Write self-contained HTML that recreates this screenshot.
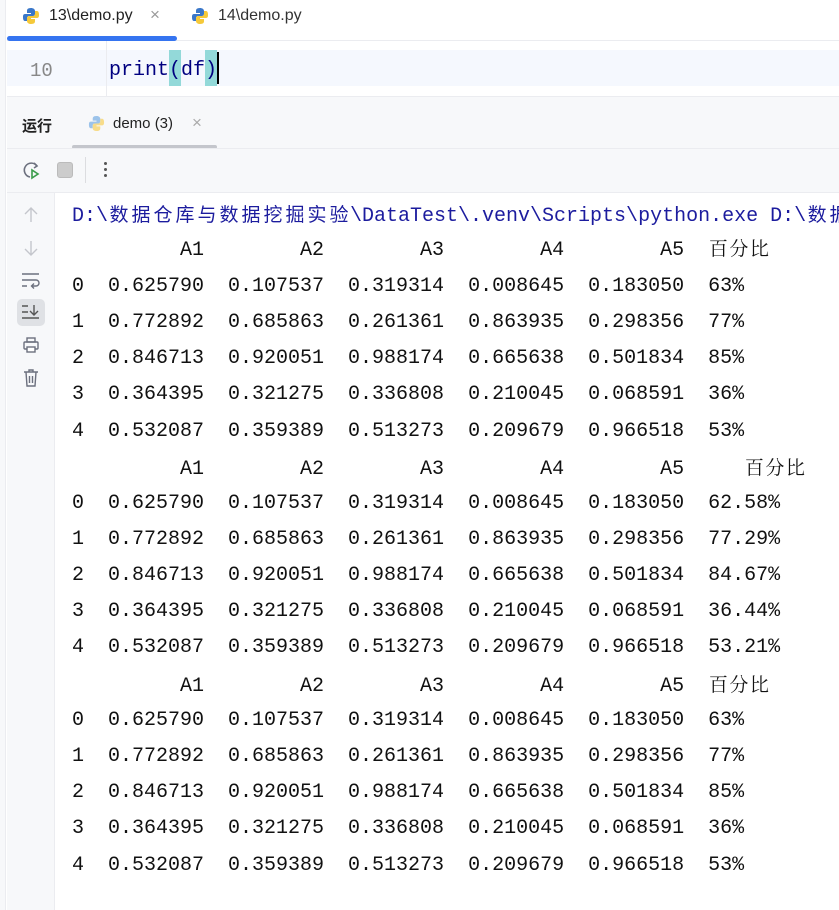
<!DOCTYPE html>
<html><head><meta charset="utf-8"><style>
*{margin:0;padding:0;box-sizing:border-box}
body{width:839px;height:910px;overflow:hidden;background:#fff;font-family:"Liberation Sans","Noto Sans CJK SC",sans-serif;position:relative}
.abs{position:absolute}
.mono{font-family:"Liberation Mono","Noto Sans CJK SC",monospace;font-size:20px;line-height:24px;white-space:pre;color:#111}
.cj{font-family:"Noto Serif CJK SC","Noto Sans CJK SC",serif;display:inline-block;width:20.5px;font-size:19px;text-align:center}
.cp{display:inline-block;width:22px;text-align:center;font-family:"Noto Sans CJK SC",sans-serif;font-size:19px}
.l{position:absolute;left:72px}
</style></head><body>
<div class="abs" style="left:0;top:0;width:6px;height:910px;background:#f7f8fa;border-right:1px solid #ebecf0"></div>
<div class="abs" style="left:7px;top:0;width:832px;height:41px;background:#fff;border-bottom:1px solid #ebecf0"></div>
<svg class="abs" style="left:22px;top:7px" width="18" height="18" viewBox="0 0 18 18"><path d="M9 1C5 1 5 3 5 4v2h4v1H3C1 7 1 9 1 10s0 4 2 4h2v-3c0-1 1-2 2-2h4c1 0 2-1 2-2V4c0-2-2-3-4-3z" fill="#3a77c9"/><path d="M9 17c4 0 4-2 4-3v-2H9v-1h6c2 0 2-2 2-3s0-4-2-4h-2v3c0 1-1 2-2 2H7c-1 0-2 1-2 2v3c0 2 2 3 4 3z" fill="#f5c93a"/></svg>
<div class="abs" style="left:49px;top:7px;font-size:16px;color:#222">13\demo.py</div>
<div class="abs" style="left:150px;top:5px;font-size:17px;color:#999">×</div>
<svg class="abs" style="left:191px;top:7px" width="18" height="18" viewBox="0 0 18 18"><path d="M9 1C5 1 5 3 5 4v2h4v1H3C1 7 1 9 1 10s0 4 2 4h2v-3c0-1 1-2 2-2h4c1 0 2-1 2-2V4c0-2-2-3-4-3z" fill="#3a77c9"/><path d="M9 17c4 0 4-2 4-3v-2H9v-1h6c2 0 2-2 2-3s0-4-2-4h-2v3c0 1-1 2-2 2H7c-1 0-2 1-2 2v3c0 2 2 3 4 3z" fill="#f5c93a"/></svg>
<div class="abs" style="left:218px;top:7px;font-size:16px;color:#333">14\demo.py</div>
<div class="abs" style="left:7px;top:36px;width:170px;height:5px;background:#3574f0;border-radius:3px"></div>
<div class="abs" style="left:7px;top:41px;width:832px;height:55px;background:#fff"></div>
<div class="abs" style="left:7px;top:50px;width:832px;height:36px;background:#f5f8fe"></div>
<div class="abs" style="left:106px;top:41px;width:1px;height:55px;background:#ebecf0"></div>
<div class="abs mono" style="left:30px;top:59px;color:#888;font-size:19px">10</div>
<div class="abs" style="left:169px;top:50px;width:12px;height:36px;background:#93d9d9"></div>
<div class="abs" style="left:205px;top:50px;width:12px;height:36px;background:#93d9d9"></div>
<div class="abs" style="left:217px;top:52px;width:2px;height:32px;background:#000"></div>
<div class="abs mono" style="left:109px;top:59px;color:#000080">print(df)</div>
<div class="abs" style="left:7px;top:96px;width:832px;height:97px;background:#f7f8fa;border-top:1px solid #ebecf0"></div>
<div class="abs" style="left:22px;top:115px;font-size:15px;font-weight:bold;color:#222">运行</div>
<svg class="abs" style="left:88px;top:115px" width="17" height="17" viewBox="0 0 18 18"><path d="M9 1C5 1 5 3 5 4v2h4v1H3C1 7 1 9 1 10s0 4 2 4h2v-3c0-1 1-2 2-2h4c1 0 2-1 2-2V4c0-2-2-3-4-3z" fill="#9cc3ea"/><path d="M9 17c4 0 4-2 4-3v-2H9v-1h6c2 0 2-2 2-3s0-4-2-4h-2v3c0 1-1 2-2 2H7c-1 0-2 1-2 2v3c0 2 2 3 4 3z" fill="#f7dc8a"/></svg>
<div class="abs" style="left:113px;top:115px;font-size:15px;color:#222">demo (3)</div>
<div class="abs" style="left:192px;top:113px;font-size:17px;color:#aaa">×</div>
<div class="abs" style="left:72px;top:145px;width:145px;height:4px;background:#c4c6cc;border-radius:2px"></div>
<div class="abs" style="left:7px;top:148px;width:832px;height:1px;background:#ebecf0"></div>
<svg class="abs" style="left:22px;top:160px" width="20" height="20" viewBox="0 0 20 20"><path d="M15 6A7 7 0 1 0 8 17" fill="none" stroke="#6c707e" stroke-width="1.6"/><path d="M12 3l3 3-3 2" fill="none" stroke="#6c707e" stroke-width="1.6"/><path d="M10 10v8l6-4z" fill="none" stroke="#3b9c4b" stroke-width="1.6"/></svg>
<div class="abs" style="left:57px;top:162px;width:16px;height:16px;background:#ccc;border:1px solid #bbb;border-radius:3px"></div>
<div class="abs" style="left:85px;top:157px;width:1px;height:26px;background:#dcdde0"></div>
<div class="abs" style="left:104px;top:162px;width:3px;height:3px;background:#555;border-radius:2px;box-shadow:0 6px 0 #555,0 12px 0 #555"></div>
<div class="abs" style="left:7px;top:192px;width:832px;height:1px;background:#ebecf0"></div>
<div class="abs" style="left:7px;top:193px;width:48px;height:717px;background:#f7f8fa;border-right:1px solid #ebecf0"></div>
<svg class="abs" style="left:22px;top:206px" width="18" height="18" viewBox="0 0 18 18"><path d="M9 2v14M3 8l6-6 6 6" fill="none" stroke="#c4c6cc" stroke-width="1.4"/></svg>
<svg class="abs" style="left:22px;top:239px" width="18" height="18" viewBox="0 0 18 18"><path d="M9 2v14M3 10l6 6 6-6" fill="none" stroke="#c4c6cc" stroke-width="1.4"/></svg>
<svg class="abs" style="left:21px;top:272px" width="20" height="18" viewBox="0 0 20 18"><path d="M1 2h17M1 8h14a3 3 0 0 1 0 6h-4M13 11.5l-2.5 2.5 2.5 2.5M1 14h5" fill="none" stroke="#6c707e" stroke-width="1.4"/></svg>
<div class="abs" style="left:17px;top:299px;width:28px;height:27px;background:#dfe1e5;border-radius:5px"></div>
<svg class="abs" style="left:21px;top:303px" width="20" height="18" viewBox="0 0 20 18"><path d="M1 3h6M1 9h6M1 15h17M13 2v10M9 8l4 4 4-4" fill="none" stroke="#555" stroke-width="1.4"/></svg>
<svg class="abs" style="left:22px;top:336px" width="18" height="18" viewBox="0 0 18 18"><rect x="5" y="2" width="8" height="4" fill="none" stroke="#6c707e" stroke-width="1.4"/><rect x="2" y="6" width="14" height="7" rx="1" fill="none" stroke="#6c707e" stroke-width="1.4"/><rect x="5" y="11" width="8" height="5" fill="#fff" stroke="#6c707e" stroke-width="1.4"/></svg>
<svg class="abs" style="left:22px;top:368px" width="18" height="20" viewBox="0 0 18 20"><path d="M2 4h14M7 4V2h4v2M4 4l1 14h8l1-14M7.5 8v7M10.5 8v7" fill="none" stroke="#6c707e" stroke-width="1.4"/></svg>
<div class="mono">
<div class="l" style="top:202px;color:#1c1c9e">D:\<span class="cp">数</span><span class="cp">据</span><span class="cp">仓</span><span class="cp">库</span><span class="cp">与</span><span class="cp">数</span><span class="cp">据</span><span class="cp">挖</span><span class="cp">掘</span><span class="cp">实</span><span class="cp">验</span>\DataTest\.venv\Scripts\python.exe D:\<span class="cp">数</span><span class="cp">据</span></div>
<div class="l" style="top:236px">         A1        A2        A3        A4        A5  <span class="cj">百</span><span class="cj">分</span><span class="cj">比</span></div>
<div class="l" style="top:275px">0  0.625790  0.107537  0.319314  0.008645  0.183050  63%</div>
<div class="l" style="top:311px">1  0.772892  0.685863  0.261361  0.863935  0.298356  77%</div>
<div class="l" style="top:347px">2  0.846713  0.920051  0.988174  0.665638  0.501834  85%</div>
<div class="l" style="top:383px">3  0.364395  0.321275  0.336808  0.210045  0.068591  36%</div>
<div class="l" style="top:420px">4  0.532087  0.359389  0.513273  0.209679  0.966518  53%</div>
<div class="l" style="top:455px">         A1        A2        A3        A4        A5     <span class="cj">百</span><span class="cj">分</span><span class="cj">比</span></div>
<div class="l" style="top:492px">0  0.625790  0.107537  0.319314  0.008645  0.183050  62.58%</div>
<div class="l" style="top:528px">1  0.772892  0.685863  0.261361  0.863935  0.298356  77.29%</div>
<div class="l" style="top:564px">2  0.846713  0.920051  0.988174  0.665638  0.501834  84.67%</div>
<div class="l" style="top:600px">3  0.364395  0.321275  0.336808  0.210045  0.068591  36.44%</div>
<div class="l" style="top:636px">4  0.532087  0.359389  0.513273  0.209679  0.966518  53.21%</div>
<div class="l" style="top:672px">         A1        A2        A3        A4        A5  <span class="cj">百</span><span class="cj">分</span><span class="cj">比</span></div>
<div class="l" style="top:709px">0  0.625790  0.107537  0.319314  0.008645  0.183050  63%</div>
<div class="l" style="top:745px">1  0.772892  0.685863  0.261361  0.863935  0.298356  77%</div>
<div class="l" style="top:781px">2  0.846713  0.920051  0.988174  0.665638  0.501834  85%</div>
<div class="l" style="top:817px">3  0.364395  0.321275  0.336808  0.210045  0.068591  36%</div>
<div class="l" style="top:854px">4  0.532087  0.359389  0.513273  0.209679  0.966518  53%</div>
</div>
</body></html>
